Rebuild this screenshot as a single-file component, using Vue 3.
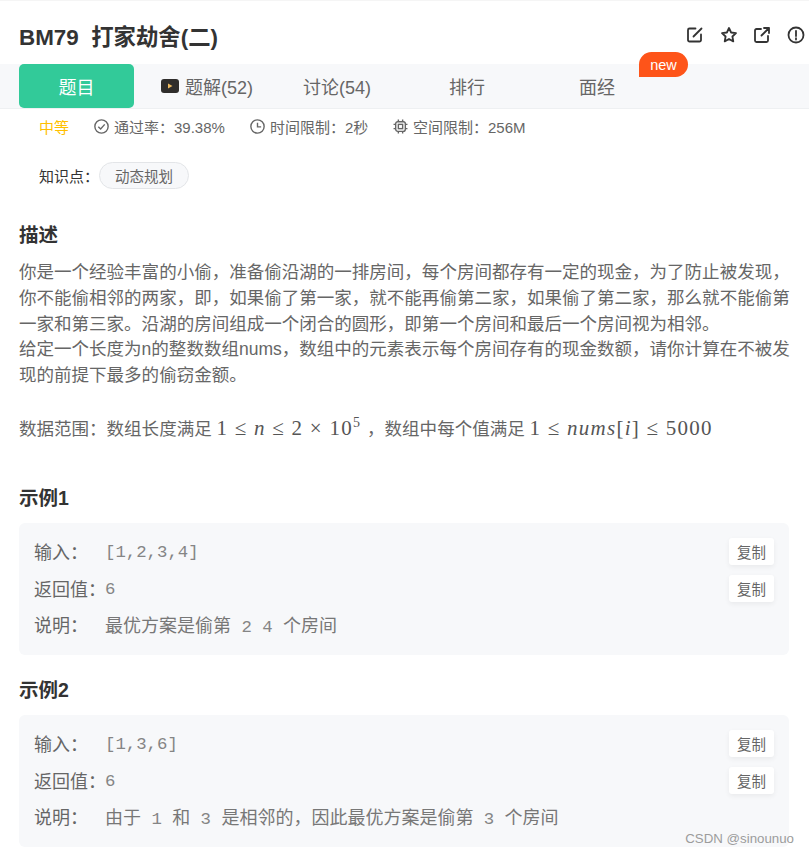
<script setup>
const parts = (v) => v.split(/([\x00-\x7f]+)/).filter(Boolean).map((text) => ({ text, code: /^[\x00-\x7f]/.test(text) }))
const tabs = [
  { label: '题目', active: true },
  { label: '题解(52)', video: true },
  { label: '讨论(54)' },
  { label: '排行' },
  { label: '面经', badge: 'new' }
]
const samples = [
  {
    title: '示例1',
    rows: [
      { k: '输入：', v: '[1,2,3,4]', copy: true },
      { k: '返回值：', v: '6', copy: true },
      { k: '说明：', v: '最优方案是偷第 2 4 个房间' }
    ]
  },
  {
    title: '示例2',
    rows: [
      { k: '输入：', v: '[1,3,6]', copy: true },
      { k: '返回值：', v: '6', copy: true },
      { k: '说明：', v: '由于 1 和 3 是相邻的，因此最优方案是偷第 3 个房间' }
    ]
  }
]
</script>

<template>
  <div class="page">
    <header class="head">
      <h1 class="title">BM79&nbsp;&nbsp;打家劫舍(二)</h1>
      <div class="actions">
        <svg viewBox="0 0 18 18" class="act"><path d="M9.500 2.500H3.500a1.500 1.500 0 0 0-1.500 1.500v10a1.500 1.500 0 0 0 1.500 1.500h10a1.500 1.500 0 0 0 1.500-1.500V8.500" /><path d="M7.500 10.500 15.500 2.500" /></svg>
        <svg viewBox="0 0 18 18" class="act"><path d="M9 2l2.100 4.500 4.900.6-3.600 3.400.9 4.900L9 13l-4.300 2.400.9-4.900L2 7.100l4.900-.6z" /></svg>
        <svg viewBox="0 0 18 18" class="act"><path d="M8 3H3.500A1.500 1.500 0 0 0 2 4.500v10A1.500 1.500 0 0 0 3.500 16h10a1.500 1.500 0 0 0 1.500-1.500V10" /><path d="M8.500 9.500 16 2M11 2h5v5" /></svg>
        <svg viewBox="0 0 18 18" class="act"><circle cx="9" cy="9" r="7.500" /><path d="M9 4.800v5.200M9 12.200v1.300" /></svg>
      </div>
    </header>

    <nav class="tabs">
      <div v-for="t in tabs" :key="t.label" class="tab" :class="{ active: t.active }">
        <svg v-if="t.video" viewBox="0 0 18 14" class="video"><rect width="18" height="14" rx="3" fill="#2f2d2b" /><path d="M7 4.500 11.500 7 7 9.500z" fill="#eebb60" /></svg>
        <span>{{ t.label }}</span>
        <em v-if="t.badge" class="badge">{{ t.badge }}</em>
      </div>
    </nav>

    <section class="meta">
      <span class="level">中等</span>
      <span class="m m1">
        <svg viewBox="0 0 14 14" class="mi"><circle cx="7" cy="7" r="6.200" /><path d="M4 7.200 6.200 9.300 10 5" /></svg>
        通过率：39.38%
      </span>
      <span class="m m2">
        <svg viewBox="0 0 14 14" class="mi"><circle cx="7" cy="7" r="6.200" /><path d="M7 3.500V7.300h3.400" /></svg>
        时间限制：2秒
      </span>
      <span class="m m3">
        <svg viewBox="0 0 14 14" class="mi"><rect x="2.500" y="2.500" width="9" height="9" rx="2" /><rect x="5" y="5" width="4" height="4" /><path d="M5 .5v2M9 .5v2M5 11.500v2M9 11.500v2M.5 5h2M.5 9h2M11.500 5h2M11.500 9h2" /></svg>
        空间限制：256M
      </span>
    </section>

    <section class="know">
      <span>知识点：</span>
      <span class="tag">动态规划</span>
    </section>

    <h2 class="h desc-h">描述</h2>
    <div class="desc">
      <p>你是一个经验丰富的小偷，准备偷沿湖的一排房间，每个房间都存有一定的现金，为了防止被发现，你不能偷相邻的两家，即，如果偷了第一家，就不能再偷第二家，如果偷了第二家，那么就不能偷第一家和第三家。沿湖的房间组成一个闭合的圆形，即第一个房间和最后一个房间视为相邻。</p>
      <p>给定一个长度为n的整数数组nums，数组中的元素表示每个房间存有的现金数额，请你计算在不被发现的前提下最多的偷窃金额。</p>
      <p class="range">数据范围：数组长度满足 <span class="math m-a">1 ≤ <i>n</i> ≤ 2 × 10<sup>5</sup></span> ，数组中每个值满足 <span class="math">1 ≤ <i>nums</i>[<i>i</i>] ≤ 5000</span></p>
    </div>

    <section v-for="s in samples" :key="s.title" class="sample">
      <h2 class="h">{{ s.title }}</h2>
      <div class="box">
        <div v-for="r in s.rows" :key="r.k" class="row">
          <span class="k">{{ r.k }}</span>
          <span class="v"><span v-for="(p, i) in parts(r.v)" :key="i" :class="p.code ? 'code' : 'cjk'">{{ p.text }}</span></span>
          <button v-if="r.copy" class="copy">复制</button>
        </div>
      </div>
    </section>

    <div class="mark">CSDN @sinounuo</div>
  </div>
</template>

<style>
html, body { margin: 0; background: #fff; overflow: hidden; }
</style>

<style scoped>
.page {
  position: relative;
  width: 809px;
  height: 853px;
  overflow: hidden;
  box-sizing: border-box;
  border-top: 1px solid #f5f5f5;
  font-family: "Liberation Sans", "Noto Sans CJK SC", sans-serif;
  color: #555;
}
.head {
  height: 63px;
  display: flex;
  align-items: center;
  justify-content: space-between;
  padding: 5px 4px 0 19px;
  box-sizing: border-box;
}
.title { margin: 0; font-size: 22.400px; font-weight: 700; color: #333; }
.actions { display: flex; gap: 15.600px; }
.act { width: 18px; height: 18px; fill: none; stroke: #333; stroke-width: 1.800; stroke-linejoin: round; stroke-linecap: round; }
.tabs {
  height: 44px;
  background: #f7f8fa;
  border-bottom: 1px solid #eef0f2;
  display: flex;
  padding-left: 19px;
}
.tab {
  position: relative;
  width: 130px;
  display: flex;
  align-items: center;
  justify-content: center;
  gap: 6px;
  font-size: 18px;
  color: #666;
}
.tab:first-child { width: 115px; margin-right: 8px; }
.tab.active { background: #32ca99; color: #fff; border-radius: 5px; }
.video { width: 18px; height: 14px; }
.badge {
  position: absolute;
  left: 107px;
  top: -12px;
  width: 49px;
  height: 25px;
  background: #fe5419;
  color: #fff;
  font-style: normal;
  font-size: 14.500px;
  display: flex;
  align-items: center;
  justify-content: center;
  border-radius: 13px 13px 13px 0;
}
.meta {
  display: flex;
  align-items: center;
  height: 34px;
  padding-left: 39px;
  font-size: 15px;
  color: #666;
}
.level { color: #ffbf00; width: 55px; }
.m { display: flex; align-items: center; gap: 5px; }
.m1 { width: 156px; }
.m2 { width: 143px; }
.mi { width: 15px; height: 15px; fill: none; stroke: #666; stroke-width: 1.300; }
.know {
  display: flex;
  align-items: center;
  padding-left: 39px;
  margin-top: 18px;
  font-size: 15px;
  color: #333;
  height: 28px;
}
.tag {
  width: 90px;
  height: 27px;
  box-sizing: border-box;
  display: flex;
  align-items: center;
  justify-content: center;
  background: #f7f8fa;
  border: 1px solid #e3e5e8;
  border-radius: 14px;
  font-size: 14.500px;
  color: #666;
}
.h { margin: 0; font-size: 19.500px; font-weight: 700; color: #333; line-height: 28px; }
.desc-h { margin: 32px 0 0 19px; }
.desc {
  margin: 11px 17px 41px 19px;
  font-size: 17.530px;
  line-height: 25.750px;
  color: #666;
}
.desc p { margin: 0; }
.desc .range { margin-top: 27px; white-space: nowrap; }
.math { font-family: "Liberation Serif", serif; font-size: 21px; letter-spacing: 1.250px; color: #555; }
.m-a { margin-right: 1px; }
.math sup { font-size: 14px; line-height: 0; }
.sample { padding: 0 20px 0 19px; margin-top: 21px; }
.box {
  margin-top: 11px;
  height: 132px;
  box-sizing: border-box;
  padding: 10px 15px;
  background: #f7f8fa;
  border-radius: 6px;
}
.row { display: flex; align-items: center; height: 37px; font-size: 18px; color: #666; }
.row:last-child { height: 35px; }
.k { flex: none; width: 71px; white-space: nowrap; }
.v { flex: 1; white-space: pre; color: #777; }
.code { font-family: "Liberation Mono", monospace; font-size: 17.330px; color: #858585; }
.cjk { font-size: 18px; }
.copy {
  width: 45px;
  height: 27px;
  padding: 0;
  border: 0;
  background: #fff;
  border-radius: 3px;
  box-shadow: 0 2px 5px rgba(0, 0, 0, .06);
  font-family: inherit;
  font-size: 14.500px;
  color: #666;
}
.mark {
  position: absolute;
  right: 15px;
  bottom: 7px;
  font-size: 13.300px;
  color: #9c9c9c;
}
</style>
